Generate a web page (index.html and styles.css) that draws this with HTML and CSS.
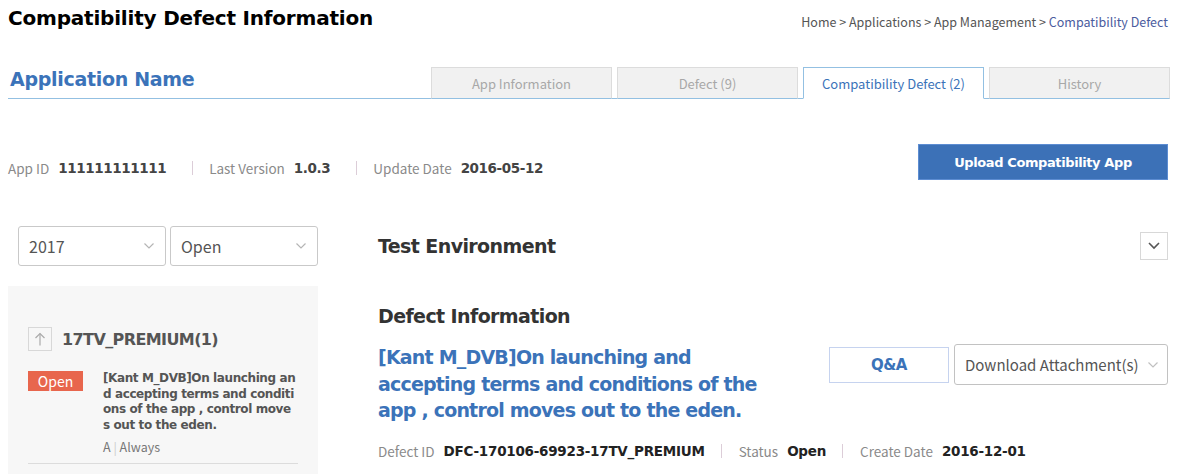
FILE: index.html
```html
<!DOCTYPE html>
<html>
<head>
<meta charset="utf-8">
<link rel="stylesheet" href="styles.css">
</head>
<body>
<div class="page">
  <header class="top">
    <h1 class="title">Compatibility Defect Information</h1>
    <nav class="crumbs">Home &gt; Applications &gt; App Management &gt; <span class="crumb-cur">Compatibility Defect</span></nav>
  </header>

  <div class="tabbar">
    <h2 class="appname">Application Name</h2>
    <ul class="tabs">
      <li class="tab">App Information</li>
      <li class="tab">Defect (9)</li>
      <li class="tab active">Compatibility Defect (2)</li>
      <li class="tab">History</li>
    </ul>
  </div>

  <div class="inforow">
    <div class="meta appmeta">
      <span class="lbl">App ID</span><span class="val">111111111111</span>
      <span class="sep"></span>
      <span class="lbl">Last Version</span><span class="val">1.0.3</span>
      <span class="sep"></span>
      <span class="lbl">Update Date</span><span class="val">2016-05-12</span>
    </div>
    <button class="upload">Upload Compatibility App</button>
  </div>

  <div class="main">
    <aside class="left">
      <div class="filters">
        <div class="select"><span>2017</span><svg class="chev" width="12" height="8" viewBox="0 0 12 8"><polyline points="1.5,1.5 6,6 10.5,1.5" fill="none" stroke="#b5b5b5" stroke-width="1.2"/></svg></div>
        <div class="select"><span>Open</span><svg class="chev" width="12" height="8" viewBox="0 0 12 8"><polyline points="1.5,1.5 6,6 10.5,1.5" fill="none" stroke="#b5b5b5" stroke-width="1.2"/></svg></div>
      </div>
      <div class="panel">
        <div class="group">
          <span class="upbox"><svg width="12" height="14" viewBox="0 0 12 14"><polyline points="1.5,6 6,1.5 10.5,6" fill="none" stroke="#aaa" stroke-width="1.2"/><line x1="6" y1="1.5" x2="6" y2="13.5" stroke="#aaa" stroke-width="1.2"/></svg></span>
          <span class="gname">17TV_PREMIUM(1)</span>
        </div>
        <div class="item">
          <span class="badge">Open</span>
          <div class="itext">
            <p class="idesc">[Kant M_DVB]On launching and accepting terms and conditions of the app , control moves out to the eden.</p>
            <p class="isub">A <span class="bar">|</span> Always</p>
          </div>
        </div>
      </div>
    </aside>

    <section class="right">
      <div class="envrow">
        <h3 class="sec">Test Environment</h3>
        <span class="togglebox"><svg width="12" height="8" viewBox="0 0 12 8"><polyline points="1,1 6,6 11,1" fill="none" stroke="#555" stroke-width="1.6"/></svg></span>
      </div>
      <h3 class="sec definfo">Defect Information</h3>
      <div class="defhead">
        <p class="deftitle">[Kant M_DVB]On launching and accepting terms and conditions of the app , control moves out to the eden.</p>
        <div class="actions">
          <button class="qa">Q&amp;A</button>
          <div class="dlselect"><span>Download Attachment(s)</span><svg width="12" height="8" viewBox="0 0 12 8"><polyline points="1.5,1.5 6,6 10.5,1.5" fill="none" stroke="#c0c0c0" stroke-width="1.2"/></svg></div>
        </div>
      </div>
      <div class="meta defmeta">
        <span class="lbl">Defect ID</span><span class="val dark">DFC-170106-69923-17TV_PREMIUM</span>
        <span class="sep"></span>
        <span class="lbl">Status</span><span class="val dark">Open</span>
        <span class="sep"></span>
        <span class="lbl">Create Date</span><span class="val dark">2016-12-01</span>
      </div>
    </section>
  </div>
</div>
</body>
</html>
```

FILE: styles.css
```css
* { box-sizing: border-box; }
html, body { margin: 0; padding: 0; background: #fff; }
body {
  font-family: "Noto Sans CJK KR", "Noto Sans", sans-serif;
  color: #555;
  width: 1179px;
  height: 474px;
  overflow: hidden;
}
p, h1, h2, h3, ul { margin: 0; padding: 0; }
.page { padding: 0 10px 0 8px; }

.top {
  display: flex;
  justify-content: space-between;
  align-items: flex-start;
  height: 44px;
  padding-top: 4px;
}
.title {
  font-family: "DejaVu Sans", sans-serif;
  font-weight: bold;
  font-size: 20px;
  letter-spacing: -0.2px;
  color: #000;
  line-height: 28px;
}
.crumbs {
  font-size: 12.5px;
  color: #555;
  line-height: 18px;
  padding-top: 9px;
  margin-right: 1px;
}
.crumb-cur { color: #4b5c9e; }

.tabbar {
  display: flex;
  justify-content: space-between;
  align-items: flex-end;
  border-bottom: 1px solid #93c0e2;
  margin-top: 23px;
}
.appname {
  font-family: "DejaVu Sans", sans-serif;
  font-weight: bold;
  font-size: 19px;
  letter-spacing: -0.3px;
  color: #3b73b9;
  padding-left: 2px;
  line-height: 24px;
  margin-bottom: 7px;
}
.tabs {
  list-style: none;
  display: flex;
  gap: 5px;
  margin-bottom: -1px;
  margin-right: -1px;
}
.tab {
  width: 181px;
  height: 32px;
  background: #f1f1f1;
  border: 1px solid #dcdcdc;
  border-bottom: 1px solid #93c0e2;
  color: #a8a8a8;
  font-size: 13px;
  display: flex;
  align-items: center;
  justify-content: center;
  padding-top: 1px;
}
.tab.active {
  background: #fff;
  border: 1px solid #93c0e2;
  border-bottom-color: #fff;
  color: #3b73b9;
}

.inforow {
  display: flex;
  justify-content: space-between;
  align-items: center;
  margin-top: 45px;
  height: 36px;
}
.meta {
  display: flex;
  align-items: center;
  font-size: 13.5px;
}
.appmeta { padding-top: 11px; }
.lbl { color: #8a8a8a; margin-right: 9px; }
.val {
  font-family: "DejaVu Sans", sans-serif;
  font-weight: bold;
  font-size: 13.5px;
  letter-spacing: -0.4px;
  color: #444;
}
.val.dark { color: #222; letter-spacing: -0.25px; }
.sep {
  width: 1px;
  height: 14px;
  background: #dccdd8;
  margin: 0 17px 0 16px;
}
.appmeta .sep { margin-left: 26px; margin-right: 16px; }
.upload {
  width: 250px;
  height: 36px;
  background: #3c71b7;
  border: 1px solid #5d8dd2;
  color: #fff;
  font-family: "DejaVu Sans", sans-serif;
  font-weight: bold;
  font-size: 13px;
  letter-spacing: -0.4px;
  margin-right: 1px;
  padding: 0;
}

.main {
  display: grid;
  grid-template-columns: 310px 1fr;
  column-gap: 60px;
  margin-top: 46px;
}
.filters {
  display: flex;
  gap: 4px;
  padding-left: 10px;
}
.select {
  width: 148px;
  height: 40px;
  border: 1px solid #c9c9c9;
  border-radius: 3px;
  display: flex;
  align-items: center;
  justify-content: space-between;
  padding: 0 10px;
  font-size: 16px;
  color: #555;
}
.panel {
  margin-top: 20px;
  background: #f7f7f7;
  height: 200px;
  padding: 41px 20px 0 20px;
}
.group {
  display: flex;
  align-items: center;
  gap: 10px;
}
.upbox {
  width: 24px;
  height: 24px;
  border: 1px solid #d8d8d8;
  display: flex;
  align-items: center;
  justify-content: center;
}
.gname {
  font-family: "DejaVu Sans", sans-serif;
  font-weight: bold;
  font-size: 16px;
  letter-spacing: -0.6px;
  color: #555;
}
.item {
  display: flex;
  gap: 20px;
  margin-top: 20px;
  border-bottom: 1px solid #dcdcdc;
  padding-bottom: 8px;
}
.badge {
  flex: none;
  width: 55px;
  height: 20px;
  background: #e8664d;
  color: #fff;
  font-size: 14px;
  line-height: 20px;
  text-align: center;
}
.idesc {
  font-family: "DejaVu Sans", sans-serif;
  font-weight: bold;
  font-size: 12px;
  letter-spacing: -0.4px;
  line-height: 15.7px;
  color: #555;
  word-break: break-all;
  width: 194px;
}
.isub {
  font-size: 12.5px;
  color: #777;
  margin-top: 5px;
  line-height: 16px;
}
.bar { color: #ccc; }

.right { padding-right: 1px; }
.envrow {
  display: flex;
  justify-content: space-between;
  align-items: center;
  margin-top: 6px;
  height: 27px;
}
.sec {
  font-family: "DejaVu Sans", sans-serif;
  font-weight: bold;
  font-size: 19px;
  letter-spacing: -0.6px;
  color: #333;
  line-height: 24px;
}
.togglebox {
  width: 28px;
  height: 28px;
  border: 1px solid #d8d8d8;
  display: flex;
  align-items: center;
  justify-content: center;
}
.definfo { margin-top: 45px; }
.defhead {
  display: flex;
  justify-content: space-between;
  align-items: flex-start;
  margin-top: 16px;
}
.deftitle {
  font-family: "DejaVu Sans", sans-serif;
  font-weight: bold;
  font-size: 19px;
  letter-spacing: -0.8px;
  line-height: 26.5px;
  color: #3b73b9;
  width: 390px;
}
.actions {
  display: flex;
  gap: 5px;
  align-items: center;
}
.qa {
  width: 120px;
  height: 36px;
  background: #fff;
  border: 1px solid #c6d3ef;
  color: #3b73b9;
  font-family: "DejaVu Sans", sans-serif;
  font-weight: bold;
  font-size: 15px;
  letter-spacing: -0.5px;
  padding: 0;
}
.dlselect {
  width: 214px;
  height: 41px;
  border: 1px solid #c2c2c2;
  border-radius: 3px;
  display: flex;
  align-items: center;
  justify-content: space-between;
  padding: 0 8px 0 10px;
  font-size: 15px;
  color: #555;
  white-space: nowrap;
}
.defmeta { margin-top: 17px; }
```
